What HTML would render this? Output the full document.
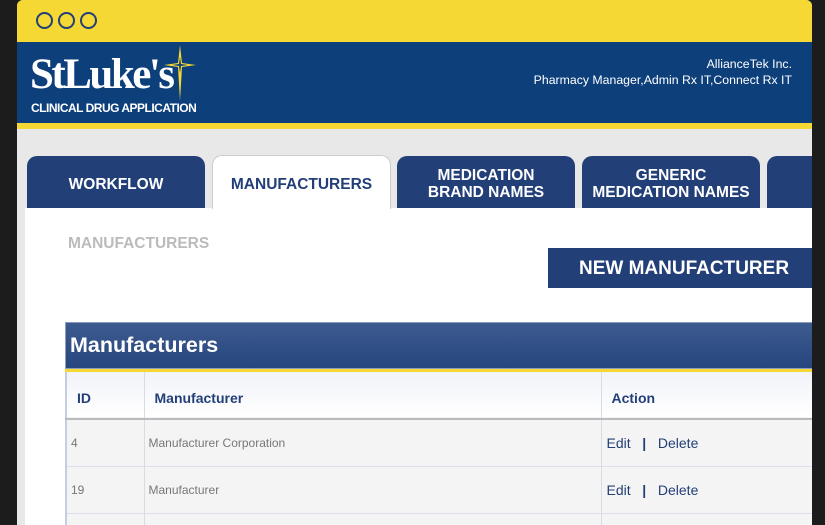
<!DOCTYPE html>
<html><head><style>
*{margin:0;padding:0;box-sizing:border-box}
html,body{width:825px;height:525px;overflow:hidden}
body{background:#1c1c1c;font-family:"Liberation Sans",Arial,sans-serif;position:relative}
.frame{position:absolute;left:17px;top:0;width:795px;height:525px;background:#e8e8e8;border-radius:6px 6px 0 0;overflow:hidden}
.ybar{position:absolute;left:0;top:0;width:100%;height:42px;background:#f5d833}
.dot{position:absolute;top:12px;width:17px;height:17px;border:2px solid #233f78;border-radius:50%}
.hdr{position:absolute;left:0;top:42px;width:100%;height:81px;background:#0d3f7b}
.ystripe{position:absolute;left:0;top:123px;width:100%;height:6px;background:#f5d833}
.tab{position:absolute;top:156px;height:53px;background:#233f78;border-radius:10px 10px 0 0;color:#fff;font-weight:bold;font-size:15.5px;display:flex;align-items:center;justify-content:center;text-align:center;line-height:17px;padding-top:3px}
.content{position:absolute;left:8px;top:208px;width:787px;height:317px;background:#fff;overflow:hidden}
td,th{border-right:1px solid #d6dbe6}
</style></head><body>
<div class="frame">
<div class="ybar"></div>
<div class="dot" style="left:19px"></div><div class="dot" style="left:41px"></div><div class="dot" style="left:63px"></div>
<div class="hdr">
 <div style="position:absolute;left:13px;top:8px;color:#fff;font-family:'Liberation Serif',serif;font-weight:bold;font-size:43px;letter-spacing:-2.5px">StLuke's</div>
 <svg style="position:absolute;left:145px;top:3px" width="36" height="56" viewBox="0 0 36 56"><path d="M18 0 L20 18 L34 20 L20 22 L18 56 L16 22 L2 20 L16 18Z" fill="#f5d833"/><path d="M18 12 L19 19 L26 20 L19 21 L18 28 L17 21 L10 20 L17 19Z" fill="#0d3f7b"/></svg>
 <div style="position:absolute;left:14px;top:59px;color:#fff;font-weight:bold;font-size:12px;letter-spacing:-0.5px">CLINICAL DRUG APPLICATION</div>
 <div style="position:absolute;right:20px;top:14px;color:#fff;font-size:12.3px;text-align:right;line-height:16px">AllianceTek Inc.<br>Pharmacy Manager,Admin Rx IT,Connect Rx IT</div>
</div>
<div class="ystripe"></div>
<div class="tab" style="left:10px;width:178px">WORKFLOW</div>
<div class="tab" style="left:195px;width:179px;background:#fff;color:#233f78;border:1px solid #ccc;border-bottom:none;height:54px;top:155px;z-index:2">MANUFACTURERS</div>
<div class="tab" style="left:380px;width:178px">MEDICATION<br>BRAND NAMES</div>
<div class="tab" style="left:565px;width:178px">GENERIC<br>MEDICATION NAMES</div>
<div class="tab" style="left:750px;width:60px"></div>
<div class="content">
 <div style="position:absolute;left:43px;top:27px;color:#bbb;font-weight:bold;font-size:15.5px">MANUFACTURERS</div>
 <div style="position:absolute;left:523px;top:40px;width:270px;height:40px;background:#233f78;color:#fff;font-weight:bold;font-size:19px;line-height:41px;padding-left:31px">NEW MANUFACTURER</div>
 <div style="position:absolute;left:40px;top:114px;width:760px;height:47px;background:linear-gradient(#3d5b8f,#27467f);border:1px solid #8a9cc0;color:#fff;font-weight:bold;font-size:21.5px;line-height:44px;padding-left:4px">Manufacturers</div>
 <div style="position:absolute;left:40px;top:161px;width:760px;height:3px;background:#f5d833"></div>
 <table style="position:absolute;left:40px;top:164px;width:760px;border-collapse:collapse;border-left:2px solid #c5cde0">
  <tr style="height:47px;background:linear-gradient(#f1f3f8,#fff);border-bottom:2px solid #bbb;color:#233f78;font-size:14px;text-align:left">
   <th style="width:78px;padding-left:10px;padding-top:5px">ID</th><th style="width:457px;padding-left:10px;padding-top:5px">Manufacturer</th><th style="padding-left:10px;padding-top:5px">Action</th></tr>
  <tr style="height:47px;background:#f4f4f4;border-bottom:1px solid #dde;font-size:12px;color:#777"><td style="padding-left:4px">4</td><td style="padding-left:4px">Manufacturer Corporation</td><td style="padding-left:5px;color:#233f78;font-size:14px">Edit &nbsp;&nbsp;<b>|</b>&nbsp;&nbsp; Delete</td></tr>
  <tr style="height:47px;background:#f4f4f4;border-bottom:1px solid #dde;font-size:12px;color:#777"><td style="padding-left:4px">19</td><td style="padding-left:4px">Manufacturer</td><td style="padding-left:5px;color:#233f78;font-size:14px">Edit &nbsp;&nbsp;<b>|</b>&nbsp;&nbsp; Delete</td></tr>
  <tr style="height:20px;background:#f4f4f4"><td></td><td></td><td></td></tr>
 </table>
</div>
</div>
</body></html>
